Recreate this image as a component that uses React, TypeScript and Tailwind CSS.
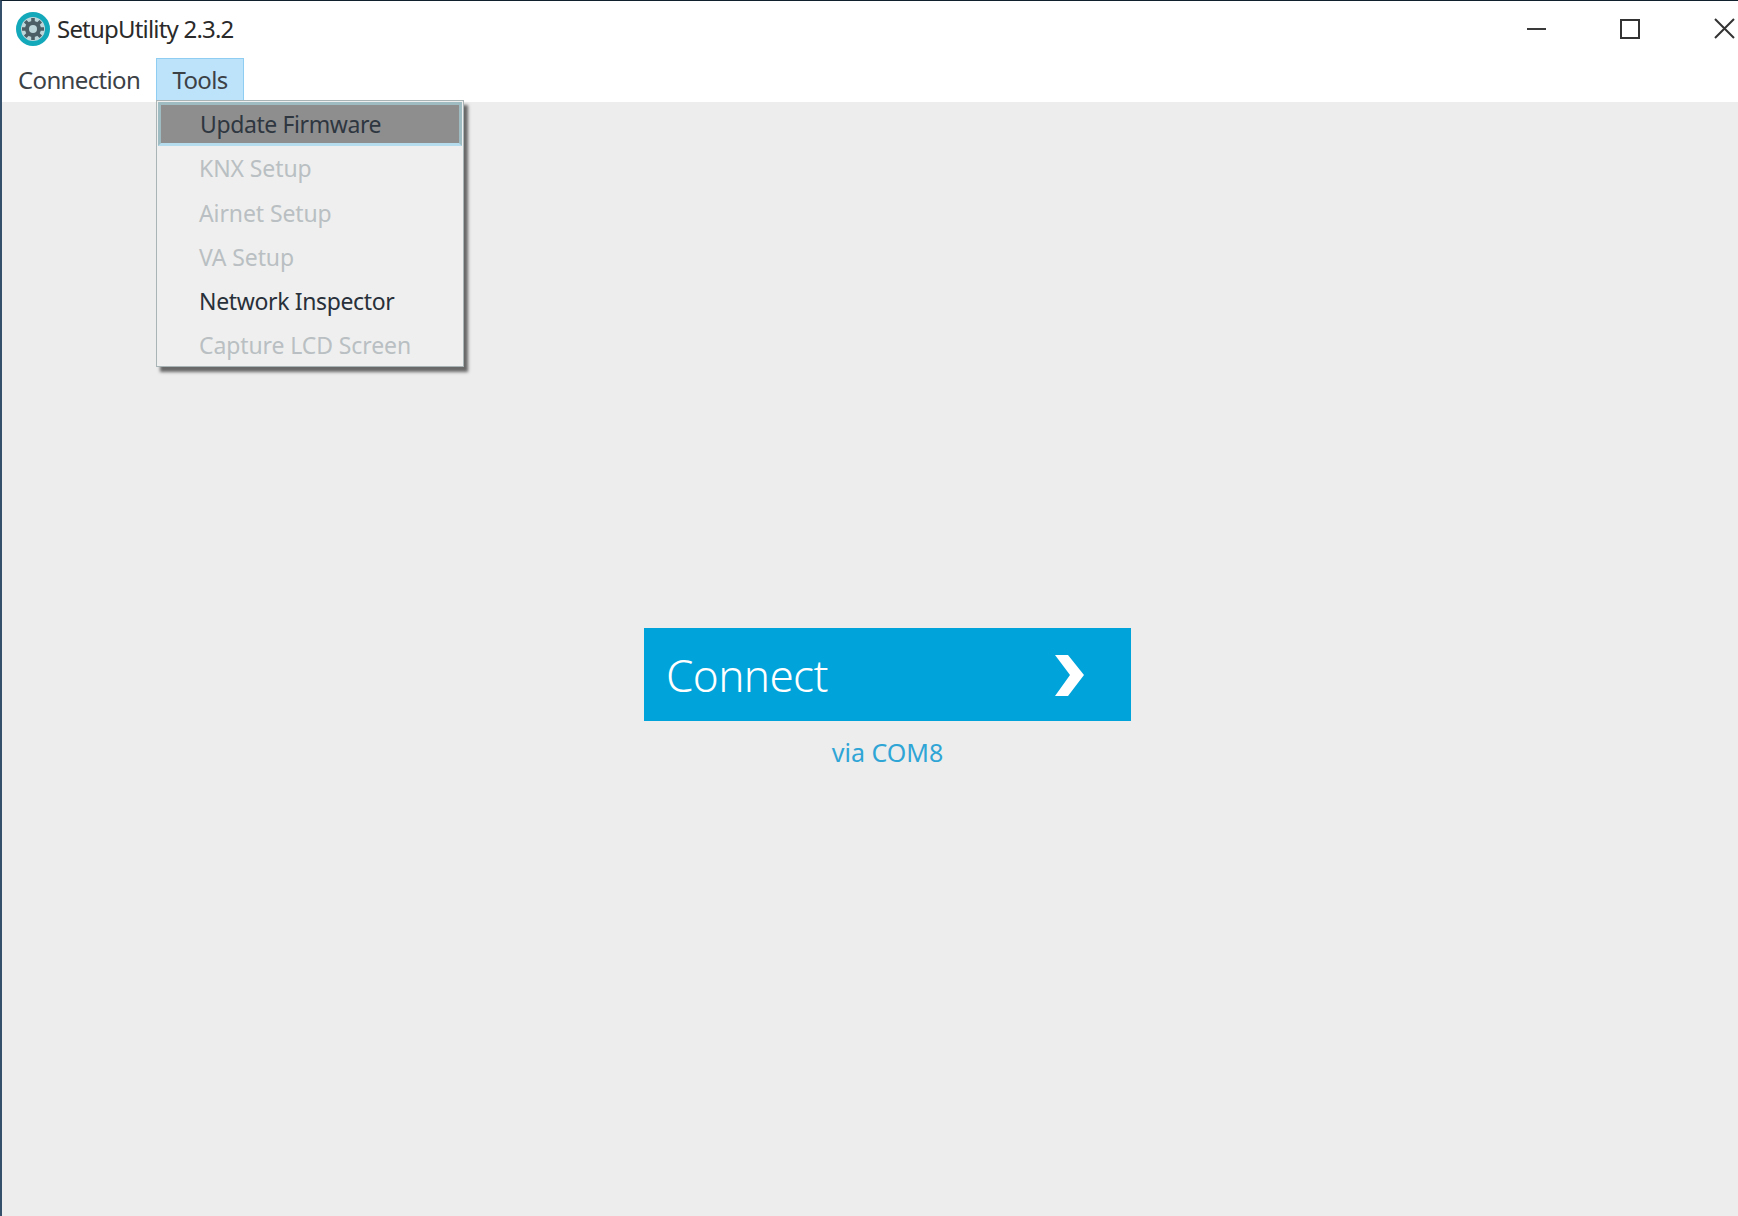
import React, {FC} from "react";

const font = {fontFamily: '"Noto Sans", "Open Sans", sans-serif'};

const items = [
    {label: "KNX Setup", enabled: false},
    {label: "Airnet Setup", enabled: false},
    {label: "VA Setup", enabled: false},
    {label: "Network Inspector", enabled: true},
    {label: "Capture LCD Screen", enabled: false},
];

const AppIcon: FC = () => {
    return (
        <svg width="34" height="34" viewBox="0 0 34 34">
            <circle cx="17" cy="17" r="14.5" fill="#bcd6da" stroke="#13a9bb" strokeWidth="5" />
            <path
                d="M17 6 V11 M17 23 V28 M6 17 H11 M23 17 H28 M9.2 9.2 L12.8 12.8 M21.2 21.2 L24.8 24.8 M24.8 9.2 L21.2 12.8 M12.8 21.2 L9.2 24.8"
                stroke="#4d5f66"
                strokeWidth="3.6"
                fill="none"
            />
            <circle cx="17" cy="17" r="6" fill="#bcd6da" stroke="#4d5f66" strokeWidth="4" />
        </svg>
    )
}

const ToolsMenu: FC = () => {
    return (
        <div className="absolute left-[-1px] top-[41px] z-10 w-[308px] h-[267px] border border-[#a9b4b6] bg-[#efefef] shadow-[4px_5px_3px_rgba(60,60,60,0.75)]">
            <div className="flex items-center h-[44px] mx-[1px] mt-[1px] pt-[1px] pl-[39px] bg-[#8e8e8e] border-[3px] border-[#9fbcc2] text-[#2e3640] text-[23px] tracking-[-0.4px] border-b-[#b5dcec]">
                Update Firmware
            </div>
            {items.map((item) => (
                <div key={item.label} className={`flex items-center h-[44.2px] pt-[1px] pl-[42px] text-[23px] ${item.enabled ? "text-[#28303a] tracking-[-0.35px]" : "text-[#b9bfc2] tracking-[-0.1px]"}`}>
                    {item.label}
                </div>
            ))}
        </div>
    )
}

const App: FC = () => {
    return (
        <div className="flex flex-col w-[1738px] h-[1216px] overflow-hidden bg-white border-t border-t-[#10202c] border-l-2 border-l-[#34506a]" style={font}>
            <div className="flex items-center justify-between h-[57px] pb-[2px] shrink-0">
                <div className="flex items-center pl-[14px]">
                    <AppIcon />
                    <span className="ml-[7px] text-[24px] text-[#2a2a2a] tracking-[-0.8px]">SetupUtility 2.3.2</span>
                </div>
                <div className="flex items-center pr-[3px]">
                    <div className="w-[19px] h-[2px] bg-[#3a3a3a] mr-[74px]" />
                    <div className="w-[20px] h-[20px] border-2 border-[#333333] mr-[74px]" />
                    <svg width="21" height="21" viewBox="0 0 21 21" className="stroke-[#333333]">
                        <path d="M1 1 L20 20 M20 1 L1 20" strokeWidth="2" fill="none" />
                    </svg>
                </div>
            </div>
            <div className="flex items-stretch h-[44px] shrink-0 text-[24px] text-[#3c4146] tracking-[-0.65px]">
                <div className="flex items-center pl-[16px] w-[154px]">Connection</div>
                <div className="relative flex items-center justify-center w-[88px] bg-[#bde3fb] border border-[#8fcdf2]">
                    Tools
                    <ToolsMenu />
                </div>
            </div>
            <div className="flex flex-col items-center flex-1 bg-[#ededed] pt-[526px] pl-[35px]">
                <button className="flex items-center justify-between w-[487px] h-[93px] pl-[22px] pr-[46px] bg-[#00a3da] text-white text-[44px] font-light tracking-[-0.6px]">
                    Connect
                    <svg width="32" height="42" viewBox="0 0 32 42" className="mt-[2px]">
                        <path d="M2 0 H15 L31 20 L15 41 H2 L17 20 Z" fill="white" />
                    </svg>
                </button>
                <div className="mt-[13px] text-[25px] text-[#2fa5d6]">via COM8</div>
            </div>
        </div>
    )
}

export default App
